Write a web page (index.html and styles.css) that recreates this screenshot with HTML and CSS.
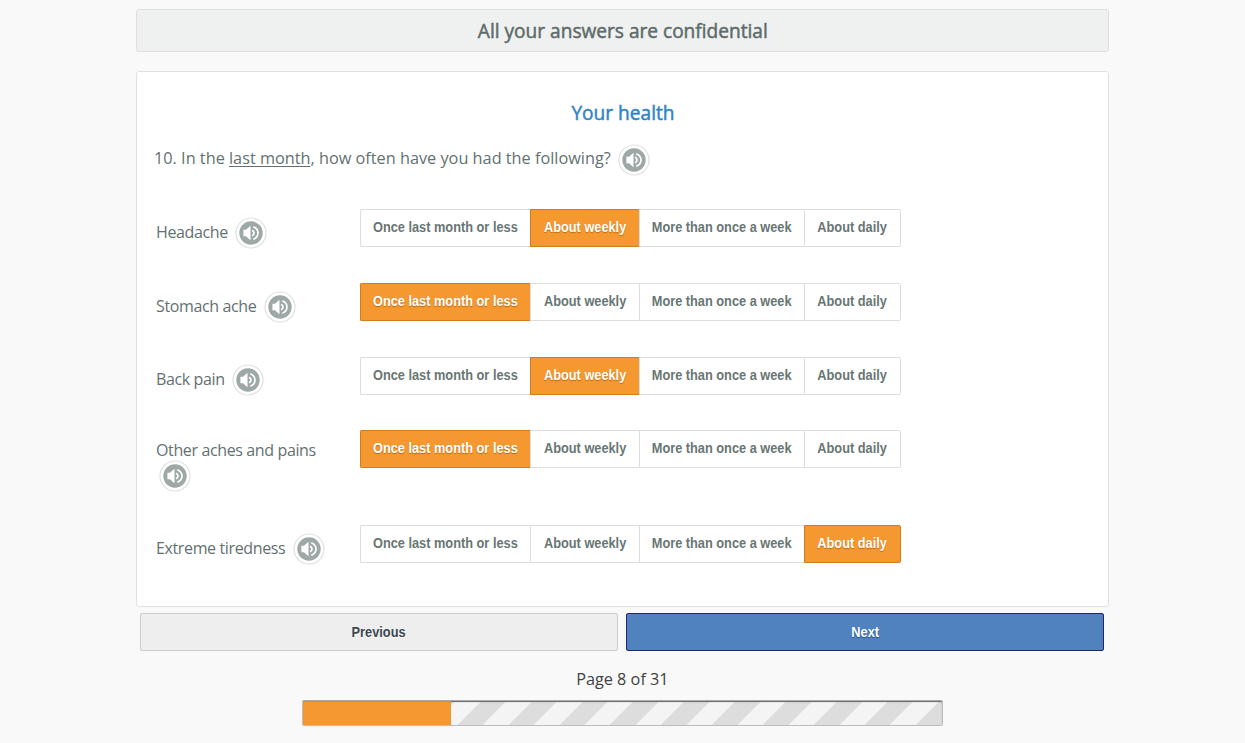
FILE: index.html
```html
<!DOCTYPE html>
<html lang="en">
<head>
<meta charset="utf-8">
<title>Your health</title>
<link rel="stylesheet" href="styles.css">
</head>
<body>
<svg class="sprite" width="0" height="0">
  <symbol id="speaker" viewBox="0 0 32 32">
    <circle cx="16" cy="16" r="15" fill="#fff" stroke="#dfe0e0" stroke-width="1.200"/>
    <circle cx="16" cy="16" r="11.700" fill="#9da8a7"/>
    <path d="M8.400 12.700h2.600l4.500-3.900v14.400L11 19.300H8.400z" fill="#fff"/>
    <path d="M17.100 13.200q1.900 1 1.900 2.800t-1.900 2.800M18.300 9.700q4.700 2 4.700 6.300t-4.700 6.300" fill="none" stroke="#fff" stroke-width="1.700"/>
  </symbol>
</svg>
<main class="page">
  <header class="banner"><span class="banner-text">All your answers are confidential</span></header>
  <section class="card">
    <h1 class="title"><span class="title-text">Your health</span></h1>
    <div class="question"><span class="question-text">10. In the <u>last month</u>, how often have you had the following?</span><svg class="audio"><use href="#speaker"/></svg></div>
    <div class="row">
      <div class="label"><span>Headache</span><svg class="audio"><use href="#speaker"/></svg></div>
      <div class="group"><button class="opt once"><span>Once last month or less</span></button><button class="opt weekly on"><span>About weekly</span></button><button class="opt more"><span>More than once a week</span></button><button class="opt daily"><span>About daily</span></button></div>
    </div>
    <div class="row">
      <div class="label"><span>Stomach ache</span><svg class="audio"><use href="#speaker"/></svg></div>
      <div class="group"><button class="opt once on"><span>Once last month or less</span></button><button class="opt weekly"><span>About weekly</span></button><button class="opt more"><span>More than once a week</span></button><button class="opt daily"><span>About daily</span></button></div>
    </div>
    <div class="row short">
      <div class="label"><span>Back pain</span><svg class="audio"><use href="#speaker"/></svg></div>
      <div class="group"><button class="opt once"><span>Once last month or less</span></button><button class="opt weekly on"><span>About weekly</span></button><button class="opt more"><span>More than once a week</span></button><button class="opt daily"><span>About daily</span></button></div>
    </div>
    <div class="row tall">
      <div class="label stacked"><span>Other aches and pains</span><svg class="audio"><use href="#speaker"/></svg></div>
      <div class="group"><button class="opt once on"><span>Once last month or less</span></button><button class="opt weekly"><span>About weekly</span></button><button class="opt more"><span>More than once a week</span></button><button class="opt daily"><span>About daily</span></button></div>
    </div>
    <div class="row">
      <div class="label"><span>Extreme tiredness</span><svg class="audio"><use href="#speaker"/></svg></div>
      <div class="group"><button class="opt once"><span>Once last month or less</span></button><button class="opt weekly"><span>About weekly</span></button><button class="opt more"><span>More than once a week</span></button><button class="opt daily on"><span>About daily</span></button></div>
    </div>
  </section>
  <nav class="nav">
    <button class="nav-btn prev"><span>Previous</span></button>
    <button class="nav-btn next"><span>Next</span></button>
  </nav>
  <div class="count"><span>Page 8 of 31</span></div>
  <div class="progress"><div class="fill" style="width:148px"></div></div>
</main>
</body>
</html>
```
FILE: styles.css
```css
* { box-sizing: border-box; }
body { margin: 0; height: 743px; overflow: hidden; background: #f9f9f9; color: #637170; font-family: "Open Sans", sans-serif; }
button { margin: 0; font-family: "Liberation Sans", Arial, sans-serif; font-size: 14px; font-weight: bold; }
button span { display: inline-block; transform: scaleX(0.912); }
.sprite { display: none; }
.page { width: 973px; margin-left: 136px; padding-top: 9px; }
.banner { height: 43px; border: 1px solid #dde0df; border-radius: 3px; background: #eff1f0; text-align: center; font-size: 20px; line-height: 42px; color: #5d6b6a; -webkit-text-stroke: 0.5px #5d6b6a; }
.banner-text, .title-text, .count span { display: inline-block; transform: scaleX(0.955); }
.card { height: 536px; margin-top: 19px; padding: 25px 17px 0; border: 1px solid #dfe1e1; border-radius: 3px; background: #fff; }
.title { margin: 0; height: 32px; text-align: center; font-size: 20px; line-height: 32px; font-weight: 400; color: #2f83c7; -webkit-text-stroke: 0.5px #2f83c7; }
.question { display: flex; height: 80px; padding-top: 15px; font-size: 17px; line-height: 28px; }
.question-text { white-space: nowrap; transform: scaleX(0.957); transform-origin: 0 0; }
.question u { text-underline-offset: 2px; text-decoration-thickness: 1px; }
.audio { flex: none; width: 32px; height: 32px; }
.question .audio { margin: 0 0 0 -13px; }
.row { display: grid; grid-template-columns: 204px 541px; height: 74px; padding-left: 2px; }
.short { height: 73px; }
.short .label { padding-top: 10px; }
.tall { height: 95px; }
.label { display: flex; align-items: flex-start; font-size: 16px; line-height: 24px; letter-spacing: -0.37px; padding-top: 11px; white-space: nowrap; }
.label .audio { margin: -3px 0 0 7.5px; }
.stacked { flex-direction: column; padding-top: 8px; }
.stacked .audio { margin: -2.5px 0 0 3px; }
.group { display: flex; height: 38px; }
.opt { height: 38px; padding: 0 0 2px; border: 1px solid #dcdedd; border-right-width: 0; background: #fff; color: #687674; white-space: nowrap; }
.opt span { margin: 0 -10px; }
.once { width: 170px; border-radius: 2px 0 0 2px; }
.weekly { width: 109px; }
.more { width: 165px; }
.daily { width: 97px; border-right-width: 1px; border-radius: 0 2px 2px 0; }
.on { background: #f59830; border-color: #d17d1d; color: #fff; text-shadow: 0 1px 1px #b8690f; }
.nav { display: flex; gap: 8px; padding: 6px 5px 0 4px; }
.nav-btn { flex: 1; height: 38px; border-radius: 2px; padding: 0 0 1px; }
.prev { background: #eee; border: 1px solid #ccc; color: #3b4751; text-shadow: 0 1px 0 #fff; }
.next { background: #5082c0; border: 1px solid #29246b; color: #fff; text-shadow: 0 1px 1px #284b78; }
.count { height: 49px; padding-top: 14px; text-align: center; font-size: 17px; line-height: 28px; color: #3e4243; }
.progress { width: 641px; height: 26px; margin: 0 auto; border: 1px solid #bdbdbd; border-top-color: #aaa; border-radius: 2px; background: repeating-linear-gradient(135deg, #f4f4f4 0 18px, #ddd 18px 36px); box-shadow: inset 0 1px 1px #666; }
.fill { height: 24px; background: #f59830; box-shadow: inset 0 1px 1px #c98c4a; }
```
